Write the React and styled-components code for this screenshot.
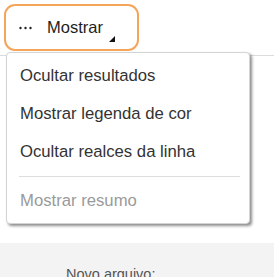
import React from 'react'
import styled, { createGlobalStyle } from 'styled-components'

const GlobalStyle = createGlobalStyle`
  html, body {
    margin: 0;
    padding: 0;
    background: #ffffff;
    font-family: "Liberation Sans", Arial, sans-serif;
  }
`

const Page = styled.div`
  position: relative;
  width: 274px;
  height: 277px;
  overflow: hidden;
  display: flex;
  flex-direction: column;
`

const Toolbar = styled.div`
  height: 56px;
  box-sizing: border-box;
  border-bottom: 1px solid #dcdcdc;
  padding: 4px 0 0 4px;
`

const ShowButton = styled.button`
  width: 135px;
  height: 47px;
  box-sizing: border-box;
  border: 2.5px solid #f5a55a;
  border-radius: 11px;
  background: #ffffff;
  display: flex;
  align-items: center;
  padding: 0 0 0 13px;
  gap: 15px;
  font-family: "Liberation Sans", Arial, sans-serif;
  font-size: 16.5px;
  color: #1e1e1e;
  cursor: pointer;
`

const Label = styled.span`
  position: relative;
  padding-right: 12px;
`

const Caret = styled.svg`
  position: absolute;
  right: 0;
  bottom: -5px;
`

const Body = styled.div`
  flex: 1;
`

const Footer = styled.div`
  height: 34px;
  background: #f3f3f3;
  padding: 23px 0 0 66px;
  box-sizing: border-box;
  font-size: 14.5px;
  color: #555;
`

const Menu = styled.ul`
  position: absolute;
  top: 52px;
  left: 6px;
  width: 244px;
  margin: 0;
  padding: 4px 0 3px;
  list-style: none;
  box-sizing: border-box;
  background: #ffffff;
  border: 1px solid #d4d4d4;
  border-radius: 4px;
  box-shadow: 2px 2px 3px rgba(0, 0, 0, 0.45);
`

const Item = styled.li`
  height: 38px;
  display: flex;
  align-items: center;
  padding-left: 13px;
  font-size: 16.7px;
  color: ${p => (p.disabled ? '#9a9a9a' : '#333333')};
`

const Separator = styled.li`
  height: 1px;
  background: #dddddd;
  margin: 5px 9px 5px 12px;
`

const Dots = () => (
  <svg width="13" height="4" viewBox="0 0 13 4">
    <circle cx="1.5" cy="2" r="1.2" fill="#222" />
    <circle cx="6.5" cy="2" r="1.2" fill="#222" />
    <circle cx="11.5" cy="2" r="1.2" fill="#222" />
  </svg>
)

export default function App() {
  return (
    <>
      <GlobalStyle />
      <Page>
        <Toolbar>
          <ShowButton>
            <Dots />
            <Label>
              Mostrar
              <Caret width="6" height="6" viewBox="0 0 6 6">
                <polygon points="6,0 6,6 0,6" fill="#111" />
              </Caret>
            </Label>
          </ShowButton>
        </Toolbar>
        <Body />
        <Footer>Novo arquivo:</Footer>
        <Menu>
          <Item>Ocultar resultados</Item>
          <Item>Mostrar legenda de cor</Item>
          <Item>Ocultar realces da linha</Item>
          <Separator />
          <Item disabled>Mostrar resumo</Item>
        </Menu>
      </Page>
    </>
  )
}
